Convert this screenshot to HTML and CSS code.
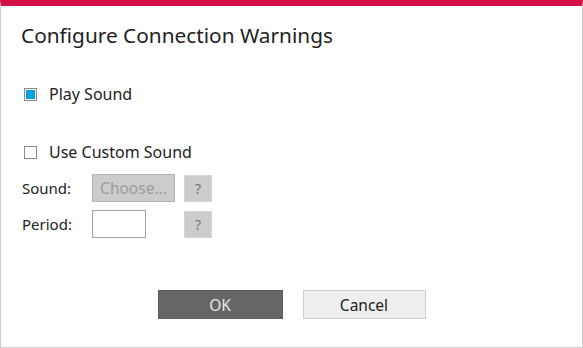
FILE: index.html
```html
<!DOCTYPE html>
<html lang="en">
<head>
    <meta charset="UTF-8">
    <meta name="viewport" content="width=device-width, initial-scale=1.0">
    <title>Configure Connection Warnings</title>
    <link rel="stylesheet" href="styles.css">
</head>
<body>
    <div class="dialog">
        <h1 class="title">Configure Connection Warnings</h1>

        <label class="check play">
            <span class="box checked"></span>
            Play Sound
        </label>

        <label class="check custom">
            <span class="box"></span>
            Use Custom Sound
        </label>

        <div class="fields">
            <span class="field-label">Sound:</span>
            <button class="choose" type="button" disabled>Choose...</button>
            <button class="help" type="button">?</button>

            <span class="field-label">Period:</span>
            <input class="period" type="text">
            <button class="help" type="button">?</button>
        </div>

        <div class="actions">
            <button class="btn ok" type="button">OK</button>
            <button class="btn cancel" type="button">Cancel</button>
        </div>
    </div>
</body>
</html>
```

FILE: styles.css
```css
body {
    margin: 0;
    padding: 0;
    font-family: "Noto Sans", "Open Sans", sans-serif;
    color: #222;
    background-color: #fff;
    overflow: hidden;
}

.dialog {
    width: 583px;
    height: 348px;
    box-sizing: border-box;
    border-top: 6px solid #d31145;
    border-left: 1px solid #cfcfcf;
    border-right: 1px solid #cfcfcf;
    border-bottom: 1px solid #cfcfcf;
    padding: 0 20px;
}

.title {
    margin: 15px 0 0 0;
    font-size: 20.8px;
    font-weight: normal;
    line-height: 28px;
}

.check {
    display: flex;
    align-items: center;
    height: 24px;
    font-size: 16px;
    padding-left: 3px;
}

.play {
    margin-top: 33px;
}

.custom {
    margin-top: 34px;
}

.box {
    width: 13px;
    height: 13px;
    box-sizing: border-box;
    border: 1px solid #8a8a8a;
    margin-right: 12px;
    background-color: #fff;
}

.box.checked {
    padding: 1px;
    background-clip: content-box;
    background-color: #00a3e0;
}

.fields {
    display: grid;
    grid-template-columns: 62px 83px 28px;
    grid-auto-rows: 28px;
    column-gap: 9px;
    row-gap: 8px;
    margin-top: 10px;
    align-items: center;
}

.field-label {
    font-size: 15px;
    padding-left: 1px;
}

.choose {
    height: 28px;
    padding: 0;
    font-family: inherit;
    font-size: 15.5px;
    color: #9c9c9c;
    background-color: #cccccc;
    border: 1px solid #b3b3b3;
}

.help {
    width: 28px;
    height: 27px;
    padding: 0;
    font-family: inherit;
    font-size: 14px;
    color: #777;
    background-color: #cccccc;
    border: 1px solid #d6d6d6;
}

.period {
    width: 54px;
    height: 28px;
    box-sizing: border-box;
    border: 1px solid #a0a0a0;
    padding: 0 4px;
}

.actions {
    display: flex;
    justify-content: center;
    gap: 20px;
    margin-top: 52px;
}

.btn {
    height: 29px;
    padding: 0;
    font-family: inherit;
    font-size: 15.5px;
}

.ok {
    width: 125px;
    color: #e6e6e6;
    background-color: #666666;
    border: 1px solid #5e5e5e;
}

.cancel {
    width: 123px;
    color: #222;
    background-color: #efefef;
    border: 1px solid #cdcdcd;
}
```
